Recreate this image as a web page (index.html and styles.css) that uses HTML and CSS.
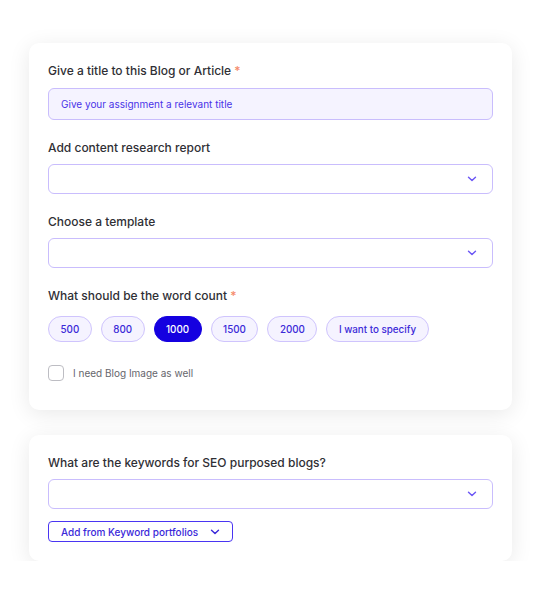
FILE: index.html
```html
<!DOCTYPE html>
<html lang="en">
<head>
    <meta charset="UTF-8">
    <meta name="viewport" content="width=device-width, initial-scale=1.0">
    <title>New Blog Assignment</title>
    <link rel="stylesheet" href="styles.css">
</head>
<body>

    <div class="page">
        <section class="card card-main">
            <div class="field">
                <label class="label">Give a title to this Blog or Article <span class="req">*</span></label>
                <div class="input">Give your assignment a relevant title</div>
            </div>

            <div class="field">
                <label class="label">Add content research report</label>
                <div class="select">
                    <svg class="chev" width="10" height="6" viewBox="0 0 10 6"><path d="M1.5 1.2 L5 4.6 L8.5 1.2" fill="none" stroke="currentColor" stroke-width="1.4" stroke-linecap="round" stroke-linejoin="round"/></svg>
                </div>
            </div>

            <div class="field">
                <label class="label">Choose a template</label>
                <div class="select">
                    <svg class="chev" width="10" height="6" viewBox="0 0 10 6"><path d="M1.5 1.2 L5 4.6 L8.5 1.2" fill="none" stroke="currentColor" stroke-width="1.4" stroke-linecap="round" stroke-linejoin="round"/></svg>
                </div>
            </div>

            <div class="field">
                <label class="label">What should be the word count <span class="req">*</span></label>
                <div class="chips">
                    <button class="chip">500</button>
                    <button class="chip">800</button>
                    <button class="chip active">1000</button>
                    <button class="chip">1500</button>
                    <button class="chip">2000</button>
                    <button class="chip wide">I want to specify</button>
                </div>
            </div>

            <label class="check">
                <span class="box"></span>
                I need Blog Image as well
            </label>
        </section>

        <section class="card card-seo">
            <div class="field">
                <label class="label">What are the keywords for SEO purposed blogs?</label>
                <div class="select">
                    <svg class="chev" width="10" height="6" viewBox="0 0 10 6"><path d="M1.5 1.2 L5 4.6 L8.5 1.2" fill="none" stroke="currentColor" stroke-width="1.4" stroke-linecap="round" stroke-linejoin="round"/></svg>
                </div>
            </div>
            <button class="outline-btn">
                Add from Keyword portfolios
                <svg width="10" height="6" viewBox="0 0 10 6"><path d="M1.5 1.2 L5 4.6 L8.5 1.2" fill="none" stroke="currentColor" stroke-width="1.4" stroke-linecap="round" stroke-linejoin="round"/></svg>
            </button>
        </section>
    </div>

</body>
</html>
```

FILE: styles.css
```css
body {
    margin: 0;
    background: #ffffff;
    font-family: Inter, "Noto Sans", Arial, sans-serif;
    color: #2b2b30;
}

.page {
    padding: 43px 29px 0 29px;
    display: flex;
    flex-direction: column;
    gap: 25px;
}

.card {
    background: #fff;
    border-radius: 10px;
    box-shadow: 0 4px 22px rgba(0, 0, 0, 0.09);
    padding: 20px 19px;
    display: flex;
    flex-direction: column;
}

.card-main {
    gap: 20px;
    padding-bottom: 29px;
}

.card-seo {
    gap: 12px;
    padding-bottom: 19px;
}

.field {
    display: flex;
    flex-direction: column;
    gap: 8px;
}

.label {
    font-size: 12px;
    font-weight: 500;
    line-height: 16px;
    color: #2f2f35;
}

.req {
    color: #f58b6c;
}

.input {
    height: 30px;
    margin-top: 1px;
    border: 1px solid #c9bdfd;
    border-radius: 6px;
    background: #f5f3ff;
    padding: 0 12px;
    display: flex;
    align-items: center;
    font-size: 10px;
    color: #4a34e8;
}

.select {
    height: 28px;
    border: 1px solid #c9bdfd;
    border-radius: 6px;
    background: #fff;
    display: flex;
    align-items: center;
    justify-content: flex-end;
    padding: 0 15px;
    color: #6a55f5;
}

.chips {
    display: flex;
    gap: 9px;
    margin-top: 4px;
}

.chip {
    height: 26px;
    padding: 0 11.5px;
    border: 1px solid #cfc4fd;
    border-radius: 13px;
    background: #f5f3ff;
    font-family: inherit;
    font-size: 9.8px;
    font-weight: 500;
    color: #3b2ad8;
}

.chip.active {
    background: #1500e0;
    border-color: #1500e0;
    color: #fff;
}

.check {
    display: flex;
    align-items: center;
    gap: 9px;
    margin-top: 3px;
    font-size: 10px;
    color: #66666c;
}

.box {
    width: 14px;
    height: 14px;
    border: 1px solid #bdbdc3;
    border-radius: 4px;
}

.outline-btn {
    align-self: flex-start;
    height: 21px;
    padding: 0 12px;
    border: 1.5px solid #4a35f2;
    border-radius: 4px;
    background: #fff;
    font-family: inherit;
    font-size: 10px;
    font-weight: 500;
    color: #3a28d9;
    display: flex;
    align-items: center;
    gap: 12px;
}
```
